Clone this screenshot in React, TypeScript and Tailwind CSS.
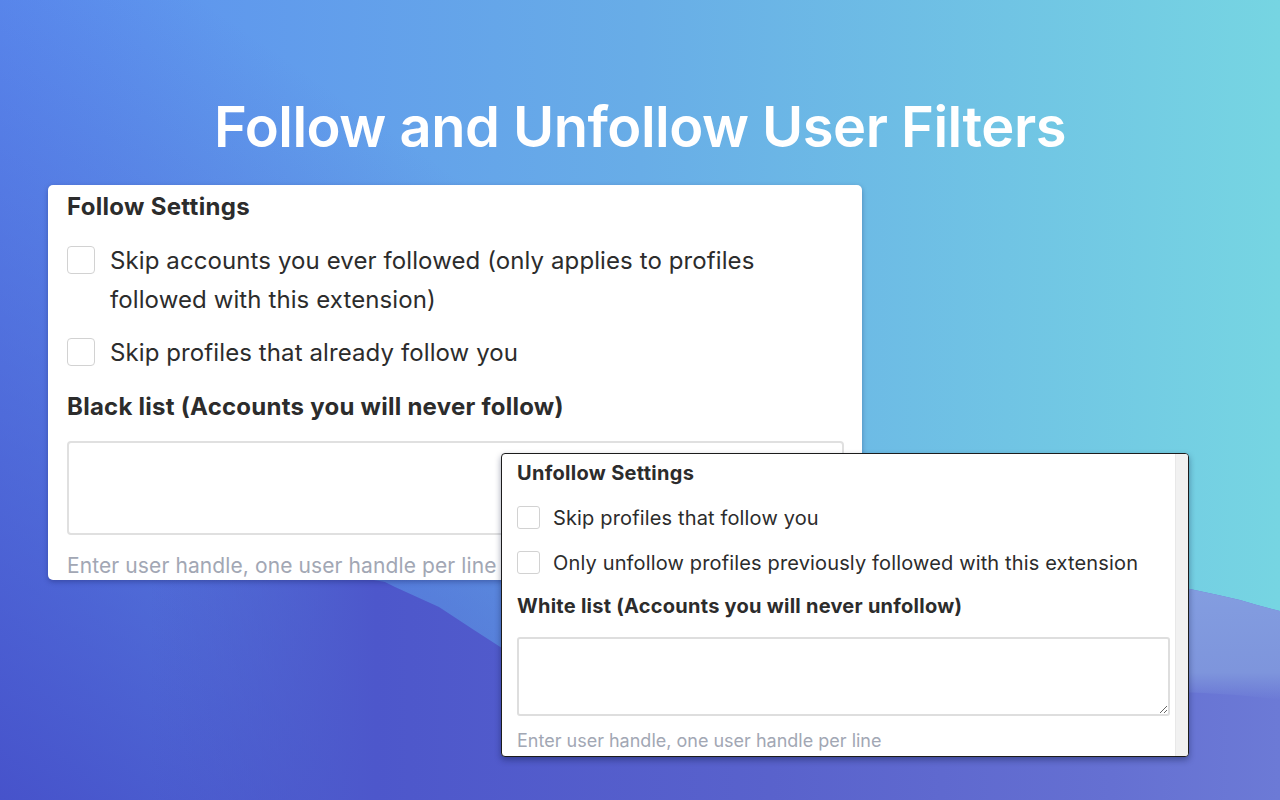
import React from "react";

function Backdrop() {
  return (
    <svg
      className="absolute inset-0 h-full w-full"
      viewBox="0 0 1280 800"
      preserveAspectRatio="none"
      aria-hidden="true"
    >
      <defs>
        <linearGradient id="sky" x1="0" y1="0" x2="1280" y2="0" gradientUnits="userSpaceOnUse">
          <stop offset="0" stopColor="#5b8ef0" />
          <stop offset="0.5" stopColor="#68ade7" />
          <stop offset="1" stopColor="#76d5e2" />
        </linearGradient>
        <linearGradient id="shade" x1="-100" y1="900" x2="420" y2="150" gradientUnits="userSpaceOnUse">
          <stop offset="0" stopColor="#4348c4" stopOpacity="1" />
          <stop offset="1" stopColor="#4348c4" stopOpacity="0" />
        </linearGradient>
        <linearGradient id="wave" x1="150" y1="0" x2="1280" y2="0" gradientUnits="userSpaceOnUse">
          <stop offset="0" stopColor="#4a52c8" stopOpacity="0" />
          <stop offset="0.2" stopColor="#4d57cb" stopOpacity="1" />
          <stop offset="0.55" stopColor="#5962cc" />
          <stop offset="0.85" stopColor="#6570d2" />
          <stop offset="1" stopColor="#6c7ad6" />
        </linearGradient>
        <linearGradient id="band" x1="0" y1="590" x2="0" y2="700" gradientUnits="userSpaceOnUse">
          <stop offset="0" stopColor="#839de0" stopOpacity="1" />
          <stop offset="0.75" stopColor="#7e95dc" stopOpacity="1" />
          <stop offset="1" stopColor="#7e95dc" stopOpacity="0" />
        </linearGradient>
      </defs>
      <rect width="1280" height="800" fill="url(#sky)" />
      <rect width="1280" height="800" fill="url(#shade)" />
      <path
        d="M150,520 C240,560 330,572 385,582 L395,587 L439,607 L474,630 L505,650 C700,690 950,600 1190,589 L1218,595 L1240,600 L1257,605 L1280,611 L1280,800 L150,800 Z"
        fill="url(#wave)"
      />
      <path
        d="M950,590 L1190,589 L1218,595 L1240,600 L1257,605 L1280,611 L1280,700 C1240,694 1200,690 950,688 Z"
        fill="url(#band)"
      />
    </svg>
  );
}

function FollowCard() {
  return (
    <div className="ml-[48px] mt-[30px] h-[395px] w-[814px] overflow-hidden rounded-[5px] bg-white pl-[19px] pr-[18px] pt-[2px] text-[#2c2c2c] shadow-[0_2px_5px_rgba(20,30,90,0.35)]">
      <h2 className="text-[24px] font-bold leading-[39px] tracking-[0.3px]">Follow Settings</h2>
      <label className="mt-[15px] flex items-start gap-[15px] text-[24px] leading-[39px] tracking-[0.1px]">
        <input
          type="checkbox"
          className="mt-[5px] h-[28px] w-[28px] shrink-0 appearance-none rounded-[4px] border border-[#d2d2d2] bg-white"
        />
        <span>
          Skip accounts you ever followed (only applies to profiles
          <br />
          followed with this extension)
        </span>
      </label>
      <label className="mt-[14px] flex items-start gap-[15px] text-[24px] leading-[39px] tracking-[0.1px]">
        <input
          type="checkbox"
          className="mt-[5px] h-[28px] w-[28px] shrink-0 appearance-none rounded-[4px] border border-[#d2d2d2] bg-white"
        />
        <span>Skip profiles that already follow you</span>
      </label>
      <h2 className="mt-[15px] text-[24px] font-bold leading-[39px] tracking-[0.25px]">
        Black list (Accounts you will never follow)
      </h2>
      <textarea className="mt-[15px] block h-[94px] w-full rounded-[4px] border-2 border-[#e0e0e0] bg-white" />
      <p className="mt-[16px] text-[21px] leading-[30px] tracking-[0.1px] text-[#a2a7b4]">
        Enter user handle, one user handle per line
      </p>
    </div>
  );
}

function UnfollowCard() {
  return (
    <div className="absolute left-[501px] top-[453px] flex h-[304px] w-[688px] overflow-hidden rounded-[4px] border border-[#1c1c1c] bg-white text-[#2c2c2c] shadow-[0_3px_6px_rgba(10,20,60,0.4)]">
      <div className="flex-1 pl-[15px] pr-[5px] pt-[3px]">
        <h2 className="text-[20px] font-bold leading-[32px] tracking-[0.3px]">Unfollow Settings</h2>
        <label className="mt-[13px] flex items-start gap-[13px] text-[20px] leading-[32px] tracking-[0.15px]">
          <input
            type="checkbox"
            className="mt-[4px] h-[23px] w-[23px] shrink-0 appearance-none rounded-[3px] border border-[#d2d2d2] bg-white"
          />
          <span>Skip profiles that follow you</span>
        </label>
        <label className="mt-[13px] flex items-start gap-[13px] text-[20px] leading-[32px] tracking-[0.15px]">
          <input
            type="checkbox"
            className="mt-[4px] h-[23px] w-[23px] shrink-0 appearance-none rounded-[3px] border border-[#d2d2d2] bg-white"
          />
          <span>Only unfollow profiles previously followed with this extension</span>
        </label>
        <h2 className="mt-[11px] text-[20px] font-bold leading-[32px] tracking-[0.25px]">
          White list (Accounts you will never unfollow)
        </h2>
        <textarea className="mt-[15px] block h-[79px] w-full rounded-[3px] border-2 border-[#dedede] bg-white" />
        <p className="mt-[12px] text-[18px] leading-[25px] text-[#a2a7b4]">
          Enter user handle, one user handle per line
        </p>
      </div>
      <div className="w-[13px] shrink-0 border-l border-[#e8e8e8] bg-[#f1f1f1]" />
    </div>
  );
}

export default function App() {
  return (
    <div className="relative h-[800px] w-[1280px] overflow-hidden [font-family:Inter,'Noto_Sans',sans-serif]">
      <Backdrop />
      <div className="relative">
        <h1 className="pt-[99px] text-center text-[56px] font-semibold leading-none tracking-[-0.5px] text-white">
          Follow and Unfollow User Filters
        </h1>
        <FollowCard />
      </div>
      <UnfollowCard />
    </div>
  );
}
